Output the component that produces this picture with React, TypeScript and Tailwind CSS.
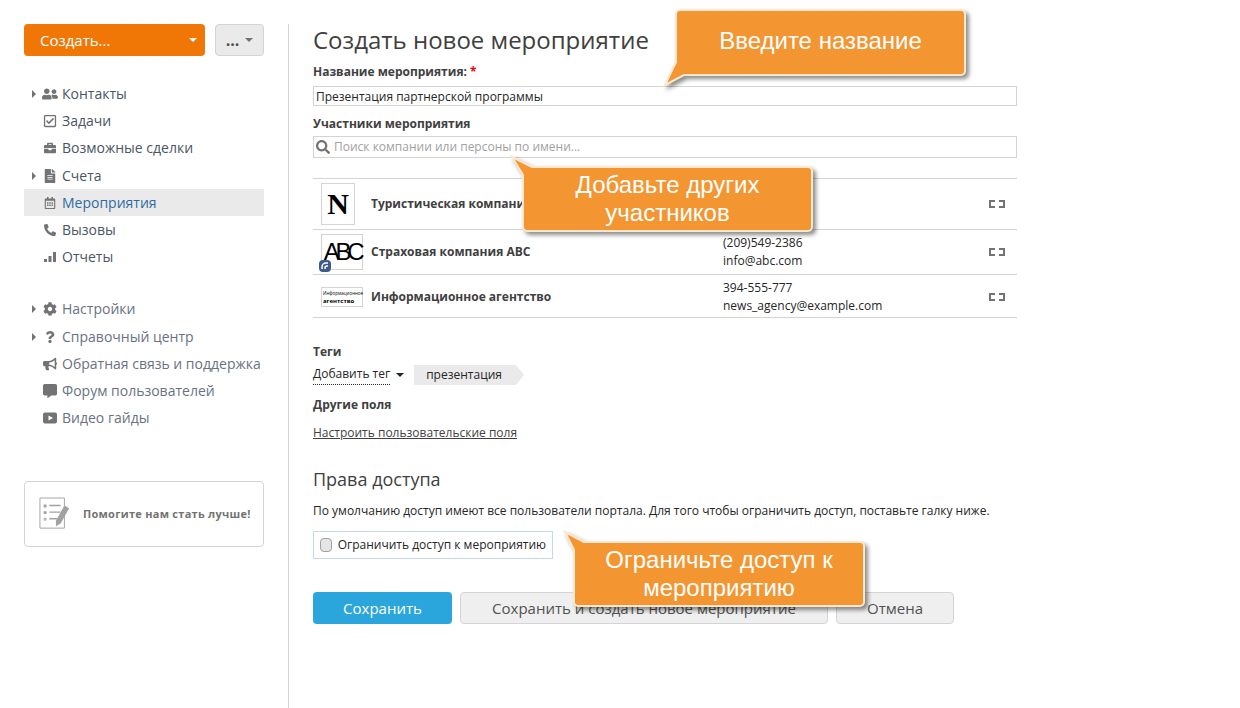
import type { ReactNode } from "react";
import {
  FaBriefcase,
  FaBullhorn,
  FaCog,
  FaCommentAlt,
  FaFileAlt,
  FaPhoneAlt,
  FaQuestion,
  FaRegCalendarAlt,
  FaRegCheckSquare,
  FaSearch,
  FaUserFriends,
} from "react-icons/fa";

function PlayIcon() {
  return (
    <svg viewBox="0 0 14 11" className="w-3.5 h-3 fill-current">
      <path d="M2 0h10a2 2 0 0 1 2 2v7a2 2 0 0 1-2 2H2a2 2 0 0 1-2-2V2a2 2 0 0 1 2-2zm3.500 3v5l4.500-2.500z" fillRule="evenodd" />
    </svg>
  );
}

function BarsIcon() {
  return (
    <svg viewBox="0 0 12 10" className="w-3 h-2.5 fill-current">
      <path d="M0 7h3v3H0zM4.500 4h3v6h-3zM9 0h3v10H9z" />
    </svg>
  );
}

function Caret({ className }: { className: string }) {
  return <span className={`border-x-4 border-t-4 border-x-transparent ${className}`} />;
}

type NavItem = { label: string; icon: ReactNode; arrow?: boolean; active?: boolean; gap?: boolean };

const mainNav: NavItem[] = [
  { label: "Контакты", icon: <FaUserFriends className="w-4 h-4" />, arrow: true },
  { label: "Задачи", icon: <FaRegCheckSquare className="w-3.5 h-3.5" /> },
  { label: "Возможные сделки", icon: <FaBriefcase className="w-3 h-3" /> },
  { label: "Счета", icon: <FaFileAlt className="w-3.5 h-3.5" />, arrow: true, gap: true },
  { label: "Мероприятия", icon: <FaRegCalendarAlt className="w-3 h-3" />, active: true },
  { label: "Вызовы", icon: <FaPhoneAlt className="w-3 h-3" /> },
  { label: "Отчеты", icon: <BarsIcon /> },
];

const helpNav: NavItem[] = [
  { label: "Настройки", icon: <FaCog className="w-3.5 h-3.5" />, arrow: true },
  { label: "Справочный центр", icon: <FaQuestion className="w-3 h-3" />, arrow: true, gap: true },
  { label: "Обратная связь и поддержка", icon: <FaBullhorn className="w-3.5 h-3.5" /> },
  { label: "Форум пользователей", icon: <FaCommentAlt className="w-3.5 h-3.5" /> },
  { label: "Видео гайды", icon: <PlayIcon /> },
];

function NavRow({ item, muted }: { item: NavItem; muted?: boolean }) {
  const textColor = item.active ? "text-[#2f6aa5]" : muted ? "text-gray-500" : "text-gray-600";
  return (
    <div className={`flex items-center h-[27px] pl-2 text-sm ${item.active ? "bg-neutral-200/80" : ""} ${item.gap ? "mt-px" : ""}`}>
      <span className="w-2.5 flex">
        {item.arrow && <span className="border-y-4 border-l-4 border-y-transparent border-l-neutral-500" />}
      </span>
      <span className="w-4 shrink-0 flex justify-center text-neutral-500">{item.icon}</span>
      <span className={`ml-1 whitespace-nowrap ${textColor}`}>{item.label}</span>
    </div>
  );
}

function SurveyIcon() {
  return (
    <svg viewBox="0 0 34 36" className="w-8 h-9 shrink-0 text-neutral-400">
      <path d="M1 1h26v32H1z" fill="none" stroke="currentColor" />
      <path d="M5 8h3v3H5zM5 15h3v3H5z" fill="currentColor" />
      <path d="M5.500 22.500h2v2h-2z" fill="none" stroke="currentColor" />
      <path d="M11 9h12M11 16h12M11 23h8" stroke="currentColor" strokeWidth="1.500" fill="none" />
      <path d="M27 9l5 3-9 16-5 3 0-6z" fill="currentColor" />
    </svg>
  );
}

function ExpandIcon() {
  return (
    <svg viewBox="0 0 16 8" className="w-4 h-2 text-neutral-500" fill="none" stroke="currentColor" strokeWidth="2">
      <path d="M6 1H1v6h5M10 1h5v6h-5" />
    </svg>
  );
}

function Row({ logo, name, phone, email, className }: { logo: ReactNode; name: string; phone?: string; email?: string; className: string }) {
  return (
    <div className={`grid grid-cols-[58px_352px_1fr_auto] items-center border-b border-neutral-300 ${className}`}>
      <div className="pl-2 relative">{logo}</div>
      <div className="font-bold text-neutral-700">{name}</div>
      <div className="leading-normal">
        <div>{phone}</div>
        <div>{email}</div>
      </div>
      <div className="pr-3 flex">
        <ExpandIcon />
      </div>
    </div>
  );
}

function Callout({ className, shape, children }: { className: string; shape: string; children: ReactNode }) {
  return (
    <div className={`absolute flex items-center justify-center text-center text-2xl leading-7 text-white font-['Liberation_Sans',sans-serif] ${className}`}>
      <svg className="absolute inset-0 w-full h-full overflow-visible drop-shadow-[3px_3px_2px_rgba(0,0,0,0.45)]">
        <path d={shape} fill="#f39530" stroke="#fde8cf" strokeWidth="2" />
      </svg>
      <span className="relative">{children}</span>
    </div>
  );
}

export default function App() {
  return (
    <div className="relative flex min-h-screen pt-6 pl-6 bg-white text-xs text-neutral-800 font-['Open_Sans',sans-serif]">
      {/* Sidebar */}
      <aside className="w-60 shrink-0">
        <div className="flex gap-2.5">
          <button className="flex-1 h-8 pl-4 pr-2 flex items-center justify-between rounded bg-[#f07706] text-white text-[15px]">
            Создать...
            <Caret className="border-t-white" />
          </button>
          <button className="w-[49px] h-8 flex items-center justify-center gap-1.5 rounded border border-neutral-300 bg-neutral-200/80 text-neutral-600 text-base font-bold">
            ...
            <Caret className="border-t-neutral-500" />
          </button>
        </div>

        <nav className="mt-6">
          {mainNav.map((item) => (
            <NavRow key={item.label} item={item} />
          ))}
        </nav>
        <nav className="mt-6 pt-px pb-0.5">
          {helpNav.map((item) => (
            <NavRow key={item.label} item={item} muted />
          ))}
        </nav>

        <div className="mt-12 py-3.5 flex items-center gap-3 px-3.5 rounded border border-neutral-300">
          <SurveyIcon />
          <span className="font-bold text-[11px] tracking-wide text-neutral-500 whitespace-nowrap">Помогите нам стать лучше!</span>
        </div>
      </aside>

      {/* Form */}
      <main className="ml-6 pl-6 border-l border-neutral-300 w-[729px]">
        <h1 className="text-2xl text-neutral-700">Создать новое мероприятие</h1>

        <label className="block mt-2 font-bold text-neutral-700">
          Название мероприятия: <span className="text-red-600">*</span>
        </label>
        <div className="mt-1.5 h-5 px-0.5 pt-px flex items-center border border-neutral-300">Презентация партнерской программы</div>

        <label className="block mt-2.5 font-bold text-neutral-700">Участники мероприятия</label>
        <div className="mt-1 h-5.5 px-0.5 flex items-center gap-1 border border-neutral-300 text-neutral-400">
          <FaSearch className="w-3.5 h-3.5 text-neutral-500" />
          Поиск компании или персоны по имени...
        </div>

        <div className="mt-5 border-t border-neutral-300">
          <Row
            className="py-1"
            name="Туристическая компания"
            logo={
              <div className="w-8.5 h-[42px] border border-neutral-300 flex items-center justify-center text-3xl font-bold text-black font-['Liberation_Serif',serif]">
                N
              </div>
            }
          />
          <Row
            className="py-1"
            name="Страховая компания ABC"
            phone="(209)549-2386"
            email="info@abc.com"
            logo={
              <>
                <div className="w-[42px] h-9 border border-neutral-300 flex items-center justify-center text-2xl tracking-[-0.18em] text-black font-['Liberation_Sans',sans-serif]">
                  ABC
                </div>
                <div className="absolute left-1.5 -bottom-0.5 w-3 h-3 rounded-sm bg-[#3f5a8a] flex items-center justify-center">
                  <svg viewBox="0 0 8 8" className="w-2 h-2" fill="none" stroke="white" strokeWidth="1.500">
                    <path d="M1 7V5a4 4 0 0 1 4-4h2M4 7V6a2 2 0 0 1 2-2h1" />
                  </svg>
                </div>
              </>
            }
          />
          <Row
            className="pt-1 pb-0.5"
            name="Информационное агентство"
            phone="394-555-777"
            email="news_agency@example.com"
            logo={
              <div className="w-[42px] h-5 border border-neutral-300 px-px flex flex-col justify-center text-[4.5px] leading-2 text-black whitespace-nowrap">
                <div>Информационное</div>
                <div className="font-bold text-[6px]">агентство</div>
              </div>
            }
          />
        </div>

        <div className="mt-6.5 font-bold text-neutral-700">Теги</div>
        <div className="mt-1 flex items-center">
          <span className="flex items-center gap-1 border-b border-dotted border-neutral-800 leading-5">
            Добавить тег
          </span>
          <Caret className="ml-1.5 border-t-neutral-800" />
          <div className="ml-2.5 h-5 pl-3 pr-3.5 flex items-center bg-neutral-200/80">презентация</div>
          <span className="border-y-10 border-l-8 border-y-transparent border-l-neutral-200/80" />
        </div>

        <div className="mt-3 font-bold text-neutral-700">Другие поля</div>
        <a className="block mt-3 underline text-neutral-700">Настроить пользовательские поля</a>

        <h2 className="mt-6 text-lg text-neutral-700">Права доступа</h2>
        <p className="mt-2.5">По умолчанию доступ имеют все пользователи портала. Для того чтобы ограничить доступ, поставьте галку ниже.</p>
        <label className="mt-3 w-60 h-7 px-1.5 flex items-center gap-1.5 border border-[#c5d8e6] whitespace-nowrap">
          <input type="checkbox" className="appearance-none w-3 h-3.5 rounded-sm border border-neutral-400 bg-neutral-200" />
          Ограничить доступ к мероприятию
        </label>

        <div className="mt-8 pt-px flex gap-2 text-[15px]">
          <button className="w-[139px] h-8 rounded-sm bg-[#2ba6dc] text-white">Сохранить</button>
          <button className="w-92 h-8 rounded-sm border border-neutral-300 bg-neutral-200/60 text-neutral-600">
            Сохранить и создать новое мероприятие
          </button>
          <button className="w-[118px] h-8 rounded-sm border border-neutral-300 bg-neutral-200/60 text-neutral-600">Отмена</button>
        </div>
      </main>

      {/* Tutorial callouts */}
      <Callout
        className="left-[676px] top-2.5 w-[289px] h-[65px] pb-1"
        shape="M4 0H285a4 4 0 0 1 4 4V61a4 4 0 0 1-4 4H8L-11 75L0 52V4a4 4 0 0 1 4-4z"
      >
        Введите название
      </Callout>
      <Callout
        className="left-[523px] top-[167px] w-[289px] h-16"
        shape="M9 0H285a4 4 0 0 1 4 4V60a4 4 0 0 1-4 4H4a4 4 0 0 1-4-4V8L-11 -10z"
      >
        Добавьте других
        <br />
        участников
      </Callout>
      <Callout
        className="left-[574px] top-[542px] w-[290px] h-16"
        shape="M10 0H286a4 4 0 0 1 4 4V60a4 4 0 0 1-4 4H4a4 4 0 0 1-4-4V8L-9 -10z"
      >
        Ограничьте доступ к
        <br />
        мероприятию
      </Callout>
    </div>
  );
}
